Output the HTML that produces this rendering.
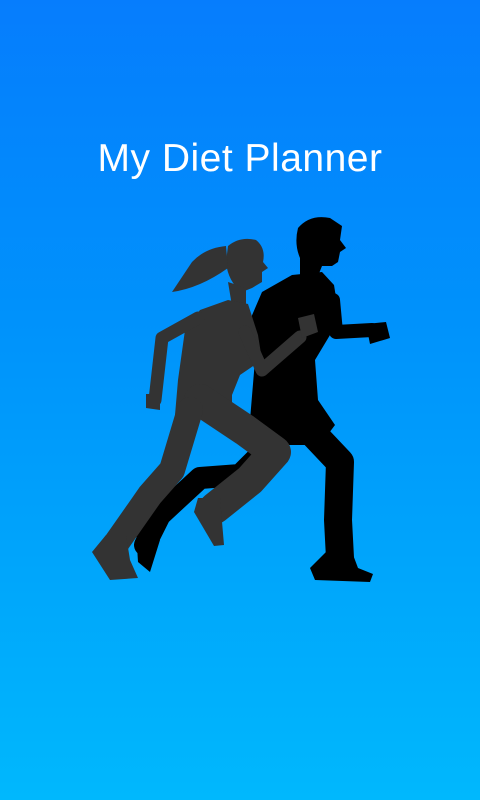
<!DOCTYPE html>
<html><head><meta charset="utf-8"><style>
html,body{margin:0;padding:0}
body{width:480px;height:800px;overflow:hidden;background:linear-gradient(#067dfd 0%,#0092fb 40%,#00a8fb 75%,#00b8fd 100%);position:relative;font-family:"Liberation Sans",sans-serif}
h1{position:absolute;left:0;width:480px;top:136px;margin:0;text-align:center;color:#fff;font-weight:normal;font-size:39px;letter-spacing:0.5px;line-height:46px}
svg{position:absolute;left:0;top:0}
</style></head><body>
<h1>My Diet Planner</h1>
<svg width="480" height="800" viewBox="0 0 480 800">
<g fill="#000" stroke="#000" stroke-linecap="round" stroke-linejoin="round">
<path d="M298 228 Q310 214 330 218 L342 226 L340 240 L346 248 L340 252 L338 262 L332 266 L322 266 L318 276 L300 276 L300 258 Q294 244 298 228 Z" stroke="none"/>
<path d="M292 275 L322 272 L334 285 L338 310 L333 330 L315 360 L318 400 L335 425 L320 445 L270 445 L250 420 L255 360 L250 320 L262 292 Z" stroke="none"/>
<path d="M333 300 L336 332 L372 330" fill="none" stroke-width="14"/>
<path d="M366 324 L386 322 L390 338 L370 344 Z" stroke="none"/>
<path d="M305 425 L340 462 L338 520 L340 558" fill="none" stroke-width="28"/>
<path d="M326 552 L352 552 L358 568 L373 574 L370 582 L315 580 L310 568 Z" stroke="none"/>
<path d="M275 440 L240 475 L200 478 L160 515 L145 545" fill="none" stroke-width="22"/>
<path d="M136 530 L160 540 L150 572 L138 562 Z" stroke="none"/>
</g>
<g fill="#333" stroke="#333" stroke-linecap="round" stroke-linejoin="round">
<path d="M228 246 Q240 236 256 240 Q266 248 263 262 L268 268 L262 272 L262 282 L252 288 L242 292 Q228 282 226 262 Z" stroke="none"/>
<path d="M226 246 Q205 248 192 262 L172 292 Q200 288 228 268 Z" stroke="none"/>
<path d="M228 282 L246 288 L246 306 L232 306 Z" stroke="none"/>
<path d="M228 300 L248 304 L258 335 L262 360 L240 375 L232 395 L232 415 L175 415 L178 380 L185 330 L200 310 Z" stroke="none"/>
<path d="M198 318 L162 338 L155 400" fill="none" stroke-width="13"/>
<path d="M146 394 L160 394 L160 410 L146 408 Z" stroke="none"/>
<path d="M245 332 L262 370 L300 337" fill="none" stroke-width="13"/>
<path d="M298 318 L314 314 L318 332 L302 338 Z" stroke="none"/>
<path d="M200 400 L245 430 L275 452 L250 480 L215 508" fill="none" stroke-width="32"/>
<path d="M198 498 L220 498 L224 545 L214 546 L194 512 Z" stroke="none"/>
<path d="M190 410 L172 470 L150 495 L115 545" fill="none" stroke-width="26"/>
<path d="M106 535 L126 535 L130 560 L138 578 L110 580 L92 552 Z" stroke="none"/>
</g>
</svg>
</body></html>
